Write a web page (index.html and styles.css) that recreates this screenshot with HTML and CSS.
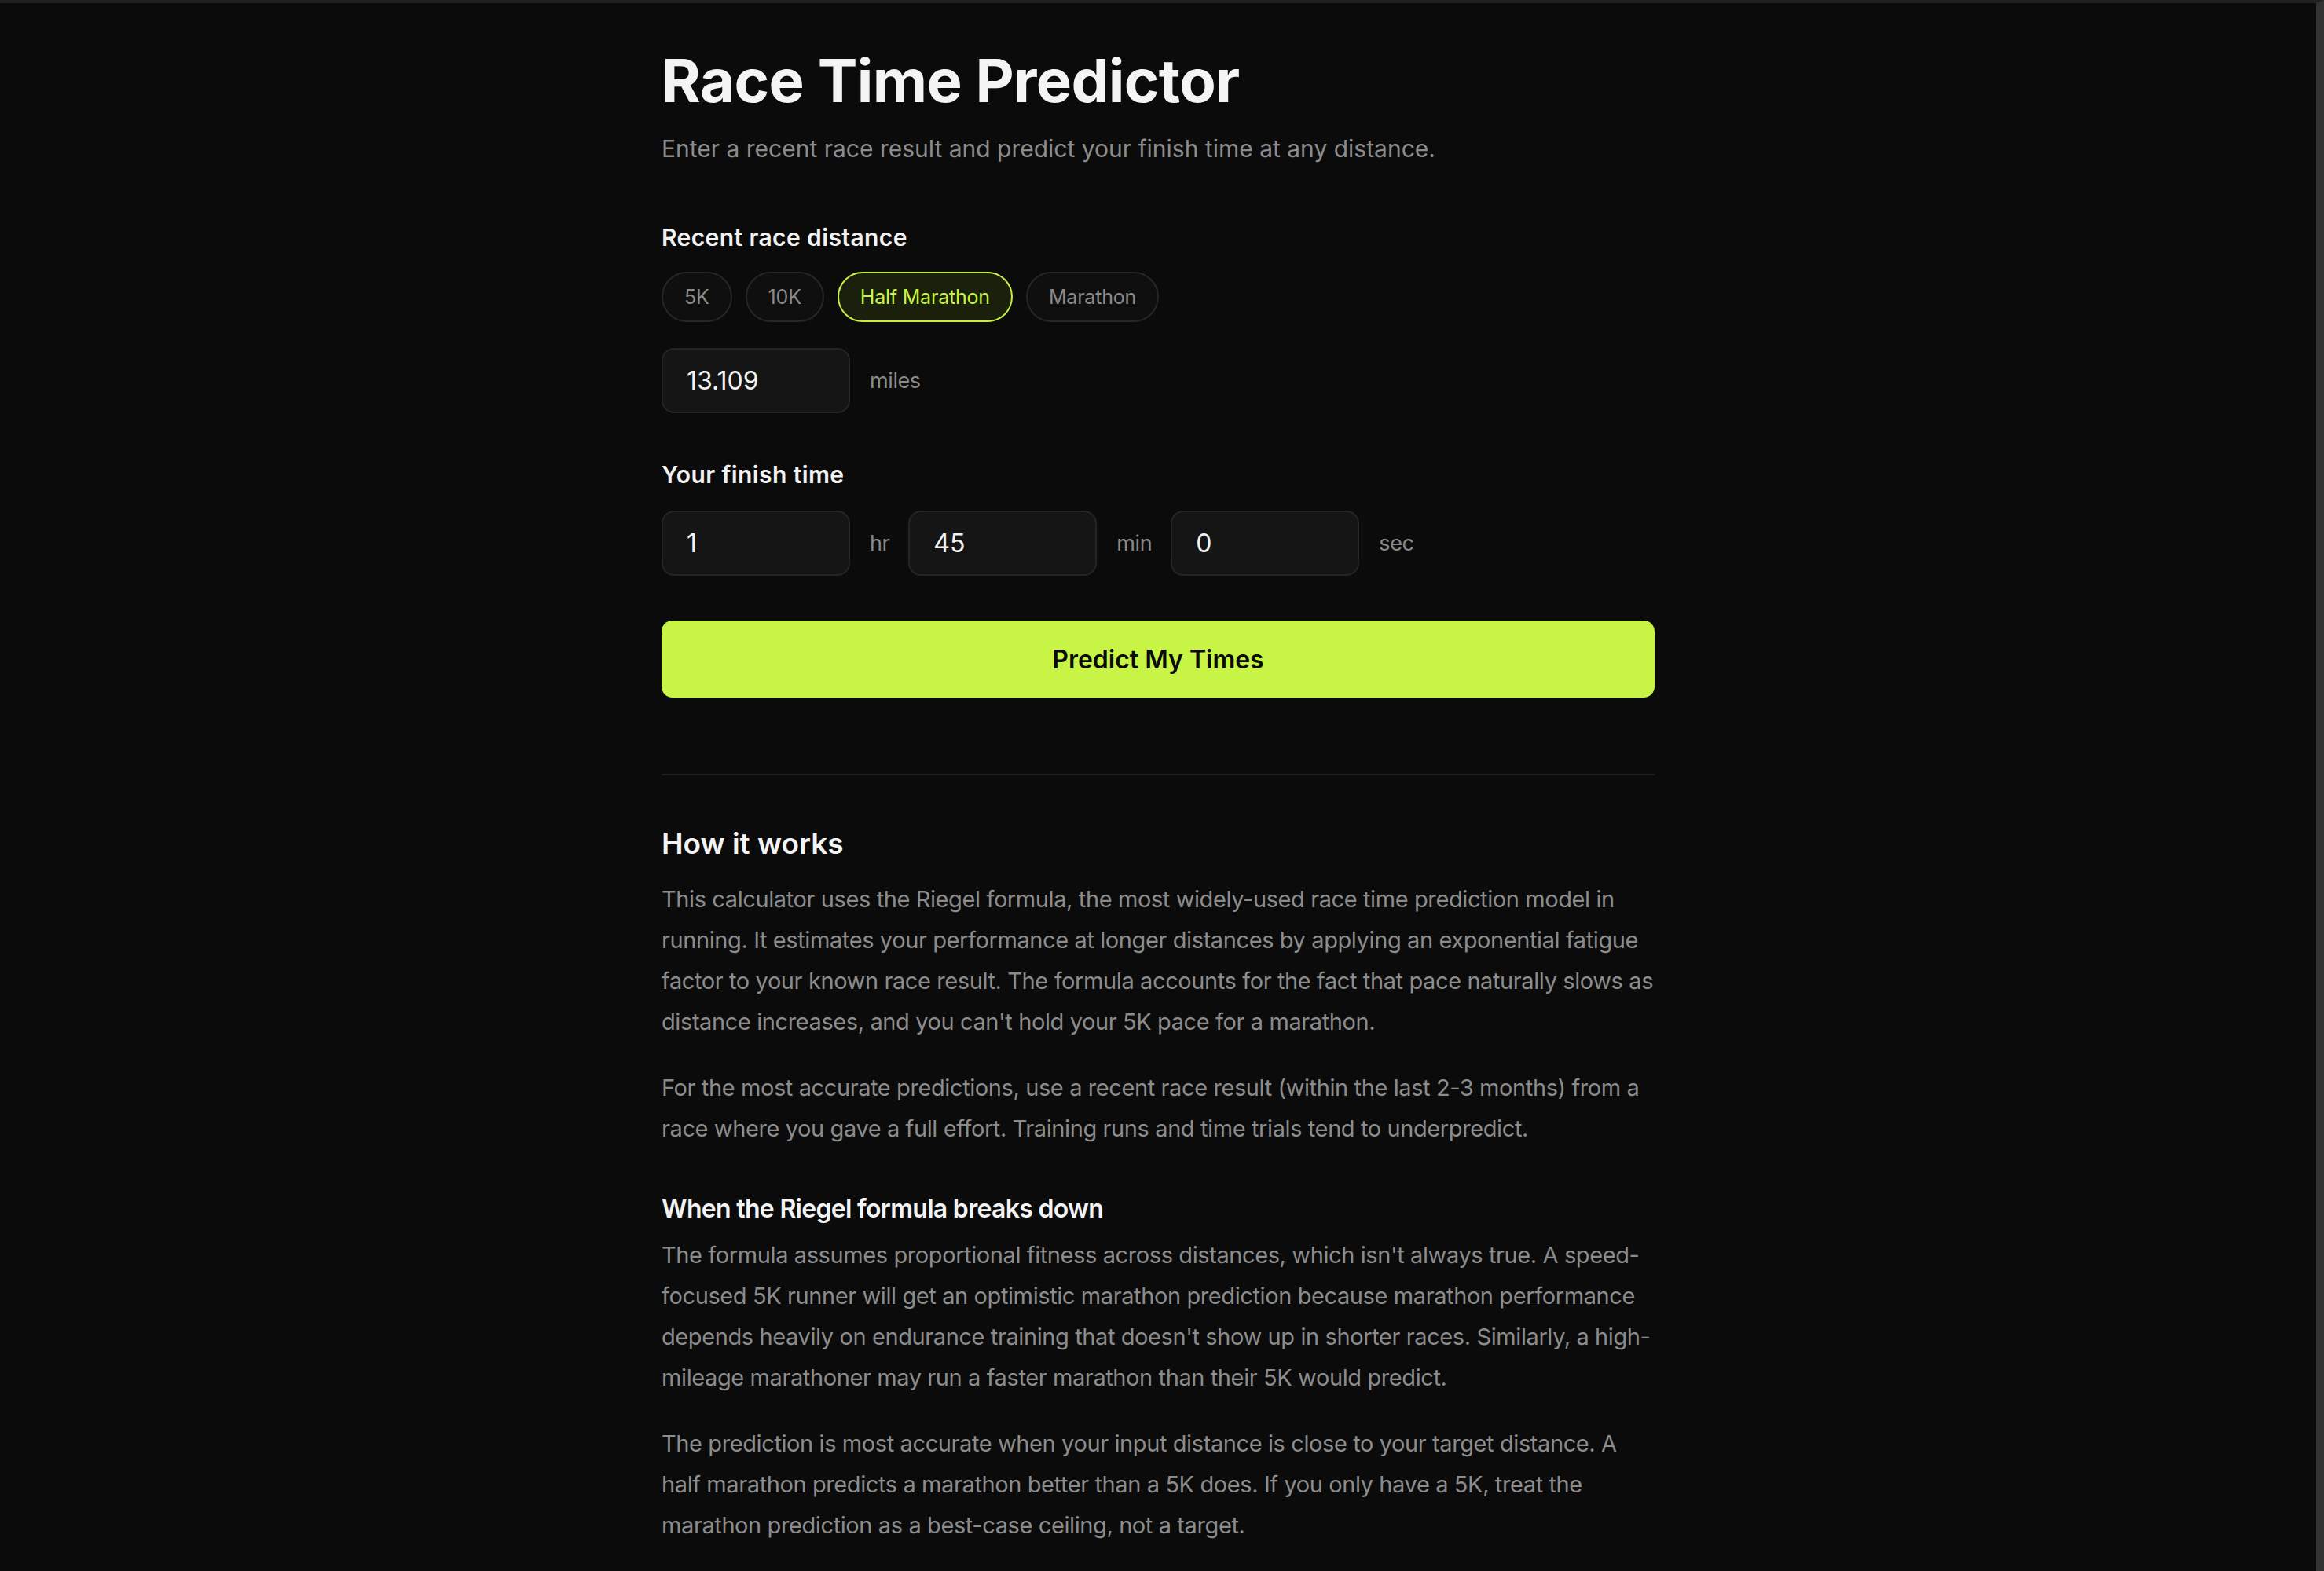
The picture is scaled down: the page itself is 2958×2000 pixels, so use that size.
FILE: index.html
```html
<!DOCTYPE html>
<html lang="en">
<head>
  <meta charset="UTF-8" />
  <meta name="viewport" content="width=device-width, initial-scale=1.0"/>
  <title>Race Time Predictor</title>
  <link rel="stylesheet" href="styles.css">
</head>
<body>

  <main class="page">
    <h1>Race Time Predictor</h1>
    <p class="lead">Enter a recent race result and predict your finish time at any distance.</p>

    <section class="field">
      <div class="label">Recent race distance</div>
      <div class="pills">
        <button class="pill">5K</button>
        <button class="pill">10K</button>
        <button class="pill active">Half Marathon</button>
        <button class="pill">Marathon</button>
      </div>
      <div class="input-row">
        <input class="num" type="text" value="13.109">
        <span class="unit">miles</span>
      </div>
    </section>

    <section class="field">
      <div class="label label-time">Your finish time</div>
      <div class="time-row">
        <div class="input-row">
          <input class="num" type="text" value="1">
          <span class="unit">hr</span>
        </div>
        <div class="input-row">
          <input class="num" type="text" value="45">
          <span class="unit">min</span>
        </div>
        <div class="input-row">
          <input class="num" type="text" value="0">
          <span class="unit">sec</span>
        </div>
      </div>
    </section>

    <button class="predict">Predict My Times</button>

    <hr class="divider">

    <article class="info">
      <h2>How it works</h2>
      <p>This calculator uses the Riegel formula, the most widely-used race time prediction model in running. It estimates your performance at longer distances by applying an exponential fatigue factor to your known race result. The formula accounts for the fact that pace naturally slows as distance increases, and you can't hold your 5K pace for a marathon.</p>
      <p>For the most accurate predictions, use a recent race result (within the last 2-3 months) from a race where you gave a full effort. Training runs and time trials tend to underpredict.</p>

      <h3>When the Riegel formula breaks down</h3>
      <p>The formula assumes proportional fitness across distances, which isn't always true. A speed-focused 5K runner will get an optimistic marathon prediction because marathon performance depends heavily on endurance training that doesn't show up in shorter races. Similarly, a high-mileage marathoner may run a faster marathon than their 5K would predict.</p>
      <p>The prediction is most accurate when your input distance is close to your target distance. A half marathon predicts a marathon better than a 5K does. If you only have a 5K, treat the marathon prediction as a best-case ceiling, not a target.</p>
    </article>
  </main>

</body>
</html>
```

FILE: styles.css
```css
* { box-sizing: border-box; margin: 0; padding: 0; }
html {
  background: #0b0b0b;
}
body {
  font-family: 'Inter', 'Liberation Sans', sans-serif;
  background: #0b0b0b;
  color: #f2f2f2;
  border-top: 4px solid #222;
  border-right: 10px solid #333;
  height: 2000px;
  overflow: hidden;
}
.page {
  width: 1264px;
  margin: 0 auto;
  padding-top: 52px;
}
h1 {
  font-size: 76px;
  line-height: 92px;
  font-weight: 700;
  letter-spacing: -0.6px;
  color: #f4f4f4;
}
.lead {
  margin-top: 19px;
  font-size: 30px;
  line-height: 44px;
  color: #8c8c8c;
}

/* form fields */
.field .label {
  margin-top: 71px;
  font-size: 30px;
  line-height: 40px;
  font-weight: 600;
  letter-spacing: 0.4px;
  color: #f2f2f2;
}
.field .label-time {
  margin-top: 58px;
}
.pills {
  display: flex;
  gap: 17px;
  margin-top: 24px;
}
.pill {
  height: 64px;
  padding: 0 27px;
  border: 2px solid #262626;
  border-radius: 32px;
  background: #0f0f0f;
  color: #8a8a8a;
  font-family: inherit;
  font-size: 25px;
  letter-spacing: -0.2px;
  cursor: pointer;
}
.pill.active {
  background: #1b200d;
  border-color: #c6f03c;
  color: #c8f545;
}
.input-row {
  display: flex;
  align-items: center;
  gap: 25px;
}
.pills + .input-row {
  margin-top: 33px;
}
.time-row {
  display: flex;
  gap: 24px;
  margin-top: 26px;
}
.num {
  width: 240px;
  height: 83px;
  padding: 0 30px;
  background: #151515;
  border: 2px solid #252525;
  border-radius: 16px;
  color: #f2f2f2;
  font-family: inherit;
  font-size: 32px;
  outline: none;
}
.unit {
  font-size: 27px;
  letter-spacing: -0.4px;
  color: #8a8a8a;
}
.predict {
  display: block;
  width: 100%;
  height: 98px;
  margin-top: 57px;
  border: none;
  border-radius: 14px;
  background: #c8f545;
  color: #0b0b0b;
  font-family: inherit;
  font-size: 32px;
  font-weight: 600;
  cursor: pointer;
}
.divider {
  margin-top: 97px;
  border: none;
  border-top: 2px solid #1f1f1f;
}

/* explainer text */
.info h2 {
  margin-top: 63px;
  font-size: 37px;
  line-height: 48px;
  font-weight: 600;
  color: #f4f4f4;
}
.info h3 {
  margin-top: 54px;
  font-size: 32px;
  line-height: 44px;
  font-weight: 600;
  letter-spacing: -0.7px;
  color: #f4f4f4;
}
.info p {
  margin-top: 32px;
  font-size: 29px;
  line-height: 52px;
  letter-spacing: -0.4px;
  color: #8c8c8c;
}
.info h2 + p {
  margin-top: 21px;
}
.info h3 + p {
  margin-top: 11px;
}
```
